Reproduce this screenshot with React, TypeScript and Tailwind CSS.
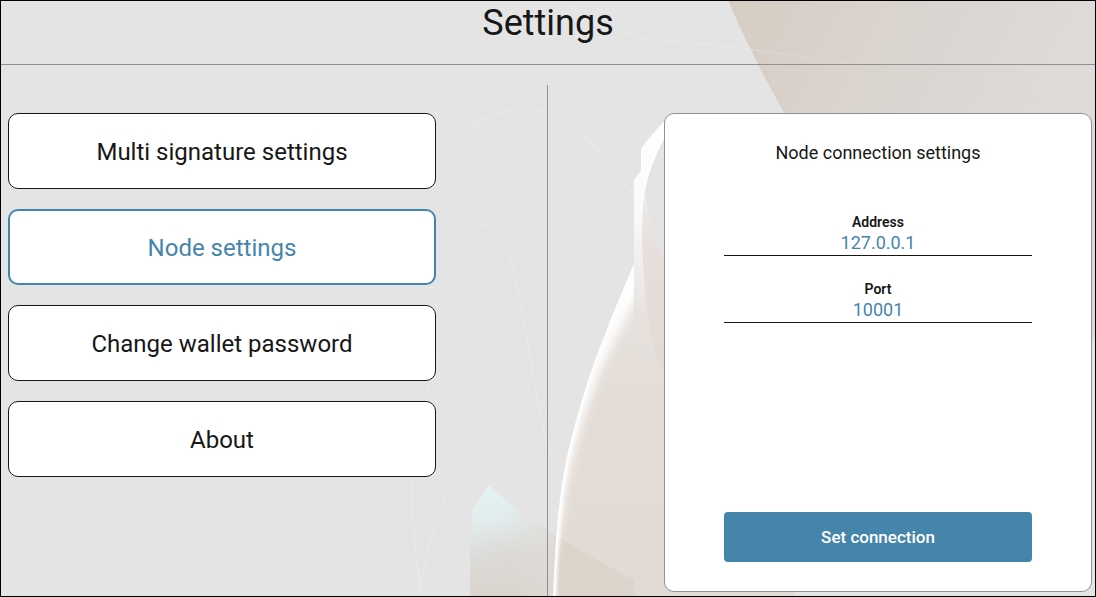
import { useState } from "react";

const menuItems = [
  "Multi signature settings",
  "Node settings",
  "Change wallet password",
  "About",
];

function Backdrop() {
  return (
    <svg
      className="absolute inset-0 -z-10 h-full w-full"
      viewBox="1 1 1094 595"
      preserveAspectRatio="xMidYMid slice"
      aria-hidden="true"
    >
      <defs>
        <linearGradient id="veil" x1="0" y1="0" x2="1" y2="0.15">
          <stop offset="0" stopColor="#d6cdc2" />
          <stop offset="0.2" stopColor="#d8cfc8" />
          <stop offset="0.42" stopColor="#dad3ce" />
          <stop offset="0.65" stopColor="#dad6d1" />
          <stop offset="1" stopColor="#dfdbd8" />
        </linearGradient>
        <linearGradient id="blade" gradientUnits="userSpaceOnUse" x1="0" y1="120" x2="0" y2="380">
          <stop offset="0" stopColor="#ffffff" />
          <stop offset="0.35" stopColor="#fbfafa" />
          <stop offset="0.55" stopColor="#f0eeec" />
          <stop offset="0.75" stopColor="#e7e2df" />
          <stop offset="1" stopColor="#e4ddd8" />
        </linearGradient>
        <linearGradient id="petal" gradientUnits="userSpaceOnUse" x1="0" y1="264" x2="0" y2="597">
          <stop offset="0" stopColor="#eae6e3" />
          <stop offset="0.35" stopColor="#e4ddd8" />
          <stop offset="0.7" stopColor="#e3dbd5" />
          <stop offset="1" stopColor="#e1dad4" />
        </linearGradient>
        <linearGradient id="fold" gradientUnits="userSpaceOnUse" x1="0" y1="140" x2="0" y2="370">
          <stop offset="0" stopColor="#f7f5f4" />
          <stop offset="0.3" stopColor="#ece7e4" />
          <stop offset="0.5" stopColor="#e6deda" />
          <stop offset="1" stopColor="#e2dad4" />
        </linearGradient>
        <linearGradient id="shard" gradientUnits="userSpaceOnUse" x1="485" y1="487" x2="505" y2="597">
          <stop offset="0" stopColor="#e4f3f2" />
          <stop offset="0.3" stopColor="#e2ecec" />
          <stop offset="0.6" stopColor="#dcdbd8" />
          <stop offset="1" stopColor="#dad3cc" />
        </linearGradient>
        <linearGradient id="shardFade" gradientUnits="userSpaceOnUse" x1="505" y1="0" x2="560" y2="0">
          <stop offset="0" stopColor="#e0dcd9" stopOpacity="0" />
          <stop offset="1" stopColor="#e0dcd9" stopOpacity="0.7" />
        </linearGradient>
        <clipPath id="petalClip">
          <path d="M634 264C626 284 614 310 603 340C591 368 575 420 566 462C559 496 555 540 553 597H634Z" />
        </clipPath>
        <filter id="soft" x="-20%" y="-10%" width="140%" height="120%">
          <feGaussianBlur stdDeviation="5" />
        </filter>
        <filter id="fine" x="-20%" y="-10%" width="140%" height="120%">
          <feGaussianBlur stdDeviation="1.5" />
        </filter>
      </defs>

      <path d="M728 0C740 28 757 65 785 114H1096V0Z" fill="url(#veil)" />
      <path d="M1090 114H1096V330L1090 350Z" fill="#dfd9d6" />

      <g fill="none" stroke="#e8e8e8" strokeWidth="1.5">
        <path d="M472 125C500 108 528 104 555 116C586 131 606 161 634 196" />
        <path d="M472 224C492 220 502 236 510 260C524 304 530 370 545 436C550 456 556 470 561 486" />
        <path d="M471 290C454 320 431 360 426 400C410 450 408 530 423 597" />
        <path d="M470 475C440 478 427 550 419 597" />
        <path d="M571 3C577 14 588 26 634 34" />
        <path d="M634 38C675 42 710 44 753 50" />
      </g>
      <g fill="none" stroke="#e8e8e8" strokeWidth="1">
        <path d="M473 320C490 348 535 396 570 436" />
        <path d="M684 3C705 16 728 32 750 47" />
      </g>
      <path
        d="M753 50C850 62 970 83 1070 113"
        fill="none"
        stroke="#ded7d2"
        strokeWidth="1"
      />

      <path
        d="M489 485L472 510V537L470 541V597H570V545L547 530C522 514 507 502 489 485Z"
        fill="url(#shard)"
      />
      <path
        d="M489 485C507 502 522 514 547 530L570 545V597H489Z"
        fill="url(#shardFade)"
      />

      <path
        d="M634 264C626 284 614 310 603 340C591 368 575 420 566 462C559 496 555 540 553 597H796L668 300V264Z"
        fill="url(#petal)"
      />
      <path
        d="M668 119C658 126 650 137 641 149V170L634 180V380H668V270C657 244 646 214 645 195C646 180 655 154 668 132Z"
        fill="url(#blade)"
      />
      <path
        d="M668 132C656 154 645 176 643 210C640 245 645 300 652 340C657 360 661 368 668 378V270C657 244 646 214 645 195C646 180 655 154 668 132Z"
        fill="url(#fold)"
      />
      <path d="M555 535L580 550C600 562 615 570 634 580V597H553Z" fill="#d6cabf" opacity="0.4" />
      <g clipPath="url(#petalClip)">
        <path
          d="M642 240C626 284 614 310 603 340C591 368 575 420 566 462C559 496 555 530 554 550C558 520 563 492 569 462C578 425 594 376 610 345L650 264Z"
          fill="#ffffff"
          stroke="#ffffff"
          strokeWidth="4"
          filter="url(#soft)"
        />
        <path
          d="M640 250C626 284 614 310 603 340C591 368 575 420 566 462C559 496 555 540 553 610"
          fill="none"
          stroke="#ffffff"
          strokeWidth="6"
          filter="url(#fine)"
        />
      </g>
    </svg>
  );
}

type FieldProps = {
  id: string;
  label: string;
  value: string;
  onChange: (value: string) => void;
};

function Field({ id, label, value, onChange }: FieldProps) {
  return (
    <div className="flex flex-col items-center">
      <label htmlFor={id} className="text-sm leading-5 font-semibold">
        {label}
      </label>
      <input
        id={id}
        type="text"
        value={value}
        onChange={(e) => onChange(e.target.value)}
        className="h-6 w-full border-b border-[#171717] bg-transparent pb-[3px] text-center text-lg leading-5 font-normal text-[#4585ac] outline-none"
      />
    </div>
  );
}

export default function App() {
  const [active, setActive] = useState("Node settings");
  const [address, setAddress] = useState("127.0.0.1");
  const [port, setPort] = useState("10001");

  return (
    <div className="relative isolate flex min-h-screen flex-col border border-black bg-[#e4e4e4] font-['Roboto',sans-serif] text-[#171717]">
      <Backdrop />
      <header className="flex h-16 justify-center border-b border-[#919191]">
        <h1 className="text-4xl leading-[44px] font-normal">Settings</h1>
      </header>

      <main className="grid flex-1 grid-cols-2 pt-5">
        <nav
          aria-label="Settings"
          className="border-r border-[#919191] pt-7 pr-5 pl-[7px]"
        >
          <ul className="flex max-w-[428px] flex-col gap-5">
            {menuItems.map((item) => (
              <li key={item}>
                <button
                  type="button"
                  onClick={() => setActive(item)}
                  className={
                    item === active
                      ? "h-19 w-full rounded-[10px] border-2 border-[#4585ac] bg-white pt-0.5 text-2xl text-[#4585ac]"
                      : "h-19 w-full rounded-[10px] border border-[#171717] bg-white pt-0.5 text-2xl"
                  }
                >
                  {item}
                </button>
              </li>
            ))}
          </ul>
        </nav>

        <section className="flex justify-end pt-7 pr-[3px] pb-1 pl-5">
          <form
            onSubmit={(e) => e.preventDefault()}
            className="flex w-full max-w-[428px] flex-col rounded-[10px] border border-[#919191] bg-white px-[59px] pt-[27px] pb-[29px]"
          >
            <h2 className="text-center text-lg leading-6 font-normal">
              Node connection settings
            </h2>
            <div className="mt-[47px] mb-8 flex flex-col gap-[23px]">
              <Field id="address" label="Address" value={address} onChange={setAddress} />
              <Field id="port" label="Port" value={port} onChange={setPort} />
            </div>
            <button
              type="submit"
              className="mt-auto h-[50px] rounded bg-[#4585ac] pt-0.5 text-[17px] font-medium text-white"
            >
              Set connection
            </button>
          </form>
        </section>
      </main>
    </div>
  );
}
